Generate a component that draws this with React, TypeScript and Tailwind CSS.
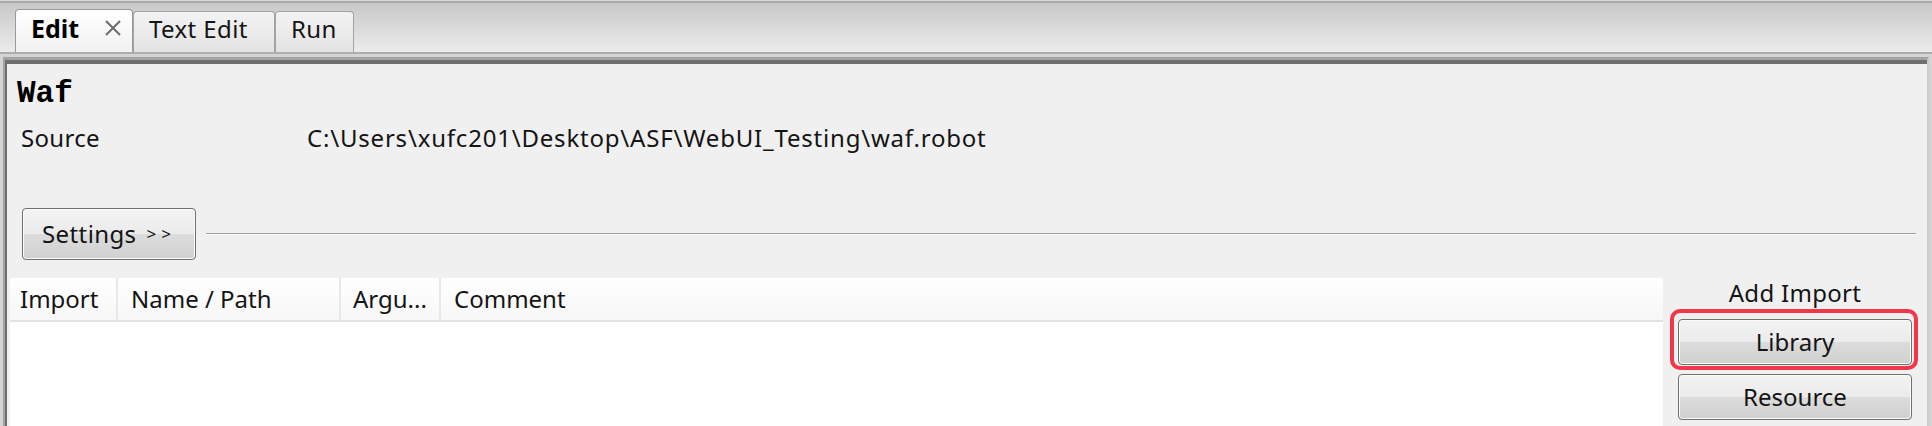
import React from "react";

const btn =
  "flex items-center justify-center rounded-[4px] border border-[#707070] shadow-[inset_0_0_0_1px_#fbfbfb] bg-[linear-gradient(to_bottom,#f3f3f3_0%,#ebebeb_50%,#dcdcdc_51%,#d0d0d0_100%)] text-[24px] leading-[32px] text-[#141414]";

function CloseIcon() {
  return (
    <svg width="18" height="16" viewBox="0 0 18 16" className="ml-auto mr-[10px] mt-[8px]">
      <path d="M2 1 L16 15 M16 1 L2 15" stroke="#6b6b6b" strokeWidth="2" fill="none" />
    </svg>
  );
}

function Tab({ label, active, width }: { label: string; active?: boolean; width: string }) {
  if (active) {
    return (
      <div className={`flex h-[43px] items-start rounded-t-[4px] border border-b-0 border-[#999999] bg-[linear-gradient(to_bottom,#ffffff,#f1f1f1)] pl-[15px] pt-[2px] ${width}`}>
        <span className="text-[25px] font-bold leading-[32px] text-black">{label}</span>
        <CloseIcon />
      </div>
    );
  }
  return (
    <div className={`flex h-[41px] items-start rounded-t-[4px] border border-b-0 border-[#a3a3a3] bg-[linear-gradient(to_bottom,#f3f3f3,#e3e3e3)] pl-[15px] pt-[1px] ${width}`}>
      <span className="text-[24px] leading-[32px] tracking-[0.4px] text-[#141414]">{label}</span>
    </div>
  );
}

export default function App() {
  return (
    <div className="flex h-[426px] w-[1932px] flex-col overflow-hidden bg-[#dadada] font-['Noto_Sans',sans-serif]">
      {/* tab strip */}
      <div className="mt-[1px] flex h-[51px] items-end border-t-2 border-[#a9a9a9] bg-[linear-gradient(to_bottom,#c8c8c8,#ececec)] pl-[15px]">
        <Tab label="Edit" active width="w-[118px]" />
        <Tab label="Text Edit" width="w-[142px]" />
        <Tab label="Run" width="w-[79px]" />
      </div>

      <div className="flex flex-1 flex-col border-t-2 border-[#adadad] bg-[#d4d4d4] pl-[3px] pr-[3px] pt-[3px]">
        <div className="flex flex-1 flex-col border-l-2 border-r-2 border-t-[3px] border-[#a3a3a3] border-r-[#cdcdcd]">
          <div className="flex flex-1 flex-col border-l-2 border-t-4 border-[#6f6f6f] bg-[#f0f0f0]">
            <div className="pl-[10px] pt-[12px] font-['Liberation_Mono',monospace] text-[31px] font-bold leading-[36px] text-black">
              Waf
            </div>

            <div className="mt-[10px] flex text-[24px] leading-[32px] text-[#141414]">
              <div className="w-[300px] pl-[14px] tracking-[0.3px]">Source</div>
              <div className="tracking-[0.8px]">C:\Users\xufc201\Desktop\ASF\WebUI_Testing\waf.robot</div>
            </div>

            <div className="mt-[54px] flex items-center">
              <button type="button" className={`${btn} ml-[15px] h-[52px] w-[174px] tracking-[0.4px]`}>
                Settings
                <span className="ml-[10px] text-[17px] tracking-[5px]">&gt;&gt;</span>
              </button>
              <div className="ml-[10px] mr-[11px] flex-1 border-b border-t border-b-white border-t-[#a0a0a0]" />
            </div>

            <div className="mt-[18px] flex flex-1">
              <div className="ml-[3px] flex w-[1653px] flex-col bg-white">
                <div className="flex h-[44px] items-center border-b-2 border-[#e2e2e2] bg-[linear-gradient(to_bottom,#ffffff,#f7f7f7)] text-[24px] leading-[32px] text-[#141414]">
                  <div className="flex h-full w-[108px] items-center border-r-2 border-[#e8e8e8] pl-[10px]">Import</div>
                  <div className="flex h-full w-[223px] items-center border-r-2 border-[#e8e8e8] pl-[13px]">Name / Path</div>
                  <div className="flex h-full w-[100px] items-center border-r-2 border-[#e8e8e8] pl-[12px]">Argu...</div>
                  <div className="flex h-full flex-1 items-center pl-[13px]">Comment</div>
                </div>
                <div className="flex-1 bg-white" />
              </div>

              <div className="flex flex-1 flex-col items-center">
                <div className="-mt-[1px] text-[24px] leading-[32px] tracking-[0.3px] text-[#141414]">Add Import</div>
                <div className="relative mt-[10px]">
                  <div className="pointer-events-none absolute -bottom-[5px] -left-[8px] -right-[6px] -top-[10px] rounded-[10px] border-[4px] border-[#f2374b]" />
                  <button type="button" className={`${btn} h-[46px] w-[234px]`}>
                    Library
                  </button>
                </div>
                <button type="button" className={`${btn} mt-[9px] h-[46px] w-[234px]`}>
                  Resource
                </button>
              </div>
            </div>
          </div>
        </div>
      </div>
    </div>
  );
}
